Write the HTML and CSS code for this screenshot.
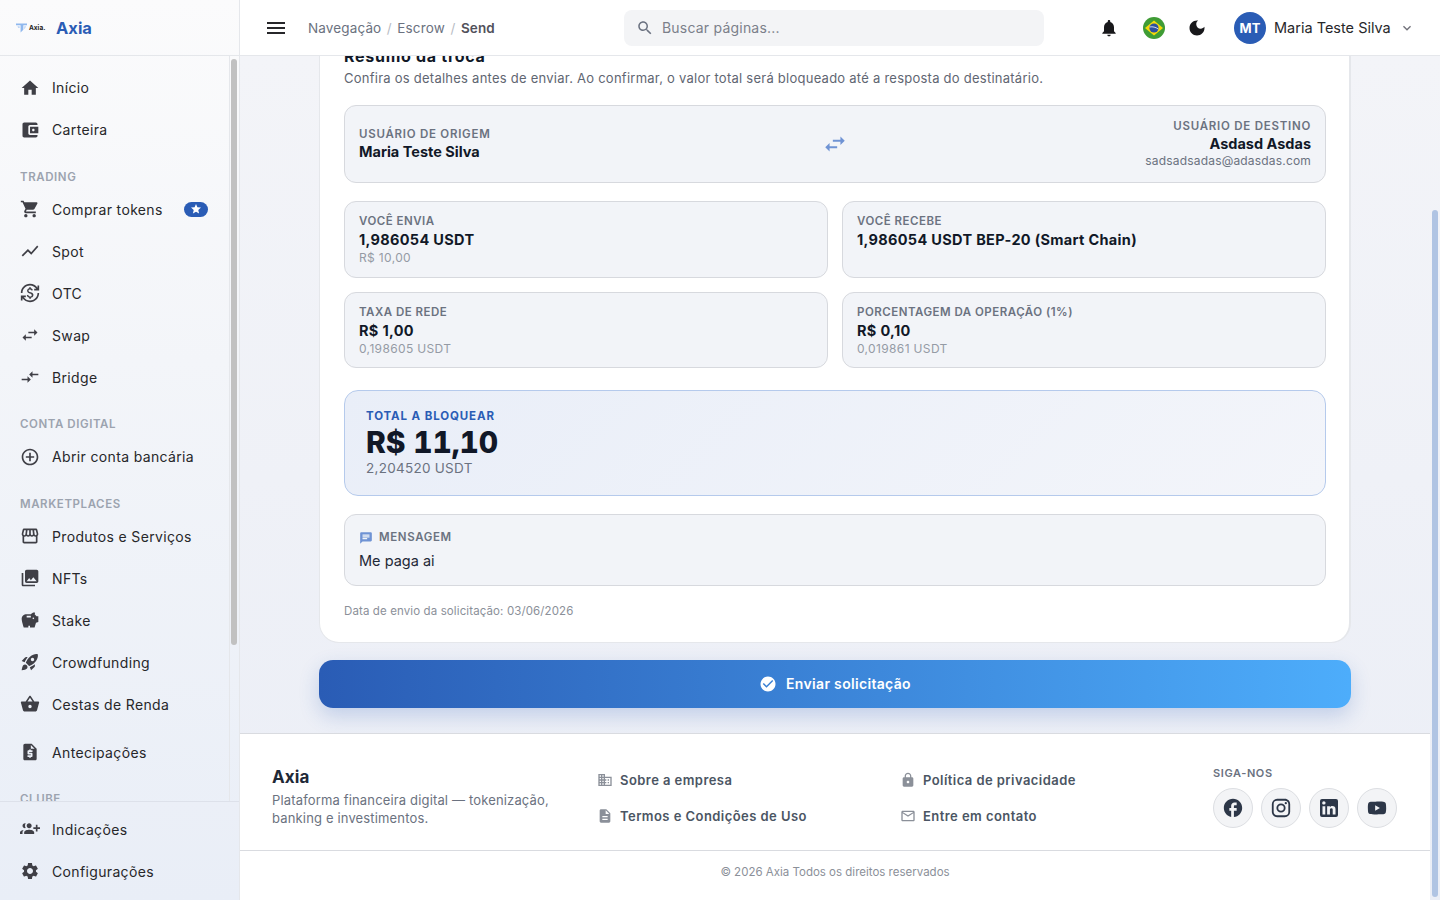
FILE: index.html
```html
<!DOCTYPE html>
<html lang="pt-BR">
<head>
<meta charset="utf-8">
<title>Axia - Send</title>
<link rel="stylesheet" href="styles.css">
</head>
<body>
<div class="app">
  <aside class="sidebar">
    <div class="brand">
      <div class="brand-logo">
        <svg class="brand-mark" viewBox="0 0 12 10"><path d="M0 0h12v2H8v5L5 10V2H0z" fill="#8fb8ee"/><path d="M1.500 3H4v2H2.500zM9 3h2L9.500 6H9z" fill="#bcd4f5"/></svg>
        <span class="brand-tiny">Axia.</span>
      </div>
      <span class="brand-name">Axia</span>
    </div>
    <div class="nav-wrap">
      <nav class="nav">
        <a class="nav-item"><svg class="ico" viewBox="0 0 24 24"><path d="M10 20v-6h4v6h5v-8h3L12 3 2 12h3v8z"/></svg><span>Início</span></a>
        <a class="nav-item"><svg class="ico" viewBox="0 0 24 24"><path d="M21 18v1c0 1.1-.9 2-2 2H5c-1.11 0-2-.9-2-2V5c0-1.1.89-2 2-2h14c1.1 0 2 .9 2 2v1h-9c-1.11 0-2 .9-2 2v8c0 1.1.89 2 2 2h9zm-9-2h10V8H12v8zm4-2.500c-.83 0-1.500-.67-1.500-1.500s.67-1.500 1.500-1.500 1.500.67 1.500 1.500-.67 1.500-1.500 1.500z"/></svg><span>Carteira</span></a>
        <div class="nav-label">TRADING</div>
        <a class="nav-item"><svg class="ico" viewBox="0 0 24 24"><path d="M7 18c-1.1 0-1.99.9-1.99 2S5.9 22 7 22s2-.9 2-2-.9-2-2-2zM1 2v2h2l3.6 7.59-1.35 2.45c-.16.28-.25.61-.25.96 0 1.1.9 2 2 2h12v-2H7.42c-.14 0-.25-.11-.25-.25l.03-.12.9-1.63h7.45c.75 0 1.41-.41 1.75-1.03l3.58-6.49c.08-.14.12-.31.12-.48 0-.55-.45-1-1-1H5.21l-.94-2H1zm16 16c-1.1 0-1.99.9-1.99 2s.89 2 1.99 2 2-.9 2-2-.9-2-2-2z"/></svg><span>Comprar tokens</span><span class="badge"><svg viewBox="0 0 24 24"><path d="M12 17.27L18.18 21l-1.64-7.03L22 9.24l-7.19-.61L12 2 9.19 8.63 2 9.24l5.46 4.73L5.82 21z"/></svg></span></a>
        <a class="nav-item"><svg class="ico" viewBox="0 0 24 24"><path d="M3.5 18.49l6-6.01 4 4L22 6.92l-1.41-1.41-7.09 7.97-4-4L2 16.99z"/></svg><span>Spot</span></a>
        <a class="nav-item"><svg class="ico" viewBox="0 0 24 24"><path d="M12.89 11.1c-1.78-.59-2.64-.96-2.64-1.9 0-1.02 1.11-1.39 1.81-1.39 1.31 0 1.79.99 1.9 1.34l1.58-.67c-.15-.45-.82-1.92-2.54-2.24V5h-2v1.26c-2.48.56-2.49 2.86-2.49 2.96 0 2.27 2.25 2.91 3.35 3.31 1.58.56 2.28 1.07 2.28 2.03 0 1.13-1.05 1.61-1.98 1.61-1.82 0-2.34-1.87-2.4-2.09l-1.66.67c.63 2.19 2.28 2.78 3.02 2.96V19h2v-1.24c.52-.09 3.02-.59 3.02-3.22.01-1.39-.6-2.61-3.25-3.44zM3 21H1v-6h6v2H4.52c1.61 2.41 4.36 4 7.48 4 4.97 0 9-4.03 9-9h2c0 6.08-4.92 11-11 11-3.72 0-7.01-1.85-9-4.67V21zm-2-9C1 5.92 5.92 1 12 1c3.72 0 7.01 1.85 9 4.67V3h2v6h-6V7h2.48C17.87 4.59 15.12 3 12 3c-4.97 0-9 4.03-9 9H1z"/></svg><span>OTC</span></a>
        <a class="nav-item"><svg class="ico" viewBox="0 0 24 24"><path d="M6.99 11L3 15l3.99 4v-3H14v-2H6.99v-3zM21 9l-3.99-4v3H10v2h7.01v3L21 9z"/></svg><span>Swap</span></a>
        <a class="nav-item"><svg class="ico" viewBox="0 0 24 24"><path d="M9.01 14H2v2h7.01v3L13 15l-3.99-4v3zm5.98-1v-3H22V8h-7.01V5L11 9l3.99 4z"/></svg><span>Bridge</span></a>
        <div class="nav-label">CONTA DIGITAL</div>
        <a class="nav-item"><svg class="ico" viewBox="0 0 24 24"><path d="M13 7h-2v4H7v2h4v4h2v-4h4v-2h-4V7zm-1-5C6.48 2 2 6.48 2 12s4.48 10 10 10 10-4.48 10-10S17.52 2 12 2zm0 18c-4.41 0-8-3.59-8-8s3.59-8 8-8 8 3.59 8 8-3.59 8-8 8z"/></svg><span>Abrir conta bancária</span></a>
        <div class="nav-label">MARKETPLACES</div>
        <a class="nav-item"><svg class="ico" viewBox="0 0 24 24"><path d="M21.9 8.89l-1.05-4.37c-.22-.9-1-1.52-1.91-1.52H5.05c-.9 0-1.69.63-1.9 1.52L2.1 8.89c-.24 1.02-.02 2.06.62 2.88.08.11.19.19.28.29V19c0 1.1.9 2 2 2h14c1.1 0 2-.9 2-2v-6.94c.09-.09.2-.18.28-.28.64-.82.87-1.87.62-2.89zm-2.99-3.9l1.05 4.37c.1.42.01.84-.25 1.17-.14.18-.44.47-.94.47-.61 0-1.14-.49-1.21-1.14L16.98 5l1.93-.01zM13 5h1.96l.54 4.52c.05.39-.07.78-.33 1.07-.22.26-.54.41-.95.41-.67 0-1.22-.59-1.22-1.31V5zM8.49 9.52L9.04 5H11v4.69c0 .72-.55 1.31-1.29 1.31-.34 0-.65-.15-.89-.41-.25-.29-.37-.68-.33-1.07zm-4.45-.16L5.05 5h1.97l-.58 4.86c-.08.65-.6 1.14-1.21 1.14-.49 0-.8-.29-.93-.47-.27-.32-.36-.75-.26-1.17zM5 19v-6.03c.08.01.15.03.23.03.87 0 1.66-.36 2.24-.95.6.6 1.4.95 2.31.95.87 0 1.65-.36 2.23-.93.59.57 1.39.93 2.29.93.84 0 1.64-.35 2.24-.95.58.59 1.37.95 2.24.95.08 0 .15-.02.23-.03V19H5z"/></svg><span>Produtos e Serviços</span></a>
        <a class="nav-item"><svg class="ico" viewBox="0 0 24 24"><path d="M22 16V4c0-1.1-.9-2-2-2H8c-1.1 0-2 .9-2 2v12c0 1.1.9 2 2 2h12c1.1 0 2-.9 2-2zm-11-4l2.03 2.71L16 11l4 5H8l3-4zM2 6v14c0 1.1.9 2 2 2h14v-2H4V6H2z"/></svg><span>NFTs</span></a>
        <a class="nav-item"><svg class="ico" viewBox="0 0 24 24"><path d="M19.83 7.5l-2.27-2.27c.07-.42.18-.81.32-1.15.31-.37.22-1.08-.71-1.08-1.64 0-3.09.79-4 2H8C4.46 5 2 7.46 2 10.5S4.5 21 4.5 21H10v-2h2v2h5.5l1.68-5.59L22 14.47V7.5h-2.17zM13 9H8V7h5v2zm3 2c-.55 0-1-.45-1-1s.45-1 1-1 1 .45 1 1-.45 1-1 1z"/></svg><span>Stake</span></a>
        <a class="nav-item"><svg class="ico" viewBox="0 0 24 24"><path d="M9.19 6.35c-2.04 2.29-3.44 5.58-3.57 5.89L2 10.69l4.05-4.05c.47-.47 1.15-.68 1.81-.55l1.33.26zM11.17 17s3.74-1.55 5.89-3.7c5.4-5.4 4.5-9.62 4.21-10.57-.95-.3-5.17-1.19-10.57 4.21C8.55 9.09 7 12.83 7 12.83L11.17 17zm6.48-2.19c-2.29 2.04-5.58 3.44-5.89 3.57L13.31 22l4.05-4.05c.47-.47.68-1.15.55-1.81l-.26-1.33zM9 18c0 .83-.34 1.58-.88 2.12C6.94 21.3 2 22 2 22s.7-4.94 1.88-6.12C4.42 15.34 5.17 15 6 15c1.66 0 3 1.34 3 3zm4-9c0-1.1.9-2 2-2s2 .9 2 2-.9 2-2 2-2-.9-2-2z"/></svg><span>Crowdfunding</span></a>
        <a class="nav-item"><svg class="ico" viewBox="0 0 24 24"><path d="M17.21 9l-4.38-6.56c-.19-.28-.51-.42-.83-.42-.32 0-.64.14-.83.43L6.79 9H2c-.55 0-1 .45-1 1 0 .09.01.18.04.27l2.54 9.27c.23.84 1 1.46 1.92 1.46h13c.92 0 1.69-.62 1.93-1.46l2.54-9.27L23 10c0-.55-.45-1-1-1h-4.79zM9 9l3-4.4L15 9H9zm3 8c-1.1 0-2-.9-2-2s.9-2 2-2 2 .9 2 2-.9 2-2 2z"/></svg><span>Cestas de Renda</span></a>
        <a class="nav-item nav-item-gap"><svg class="ico" viewBox="0 0 24 24"><path d="M14 2H6c-1.1 0-1.99.9-1.99 2L4 20c0 1.1.89 2 1.99 2H18c1.1 0 2-.9 2-2V8l-6-6zm1 10h-4v1h3c.55 0 1 .45 1 1v3c0 .55-.45 1-1 1h-1v1h-2v-1H9v-2h4v-1h-3c-.55 0-1-.45-1-1v-3c0-.55.45-1 1-1h1V9h2v1h2v2zm-2-4V3.5L17.5 8H13z"/></svg><span>Antecipações</span></a>
        <div class="nav-label">CLUBE</div>
      </nav>
      <div class="vbar vbar-nav"><div class="thumb thumb-nav"></div></div>
    </div>
    <div class="side-bottom">
      <a class="nav-item"><svg class="ico ico-flip" viewBox="0 0 24 24"><path d="M8 10H5V7H3v3H0v2h3v3h2v-3h3v-2zm10 1c1.66 0 2.99-1.34 2.99-3S19.66 5 18 5c-.32 0-.63.05-.91.14.57.81.9 1.79.9 2.86s-.34 2.04-.9 2.86c.28.09.59.14.91.14zm-5 0c1.66 0 2.99-1.34 2.99-3S14.66 5 13 5s-3 1.34-3 3 1.34 3 3 3zm6.62 2.16c.83.73 1.38 1.66 1.38 2.84v2h3v-2c0-1.54-2.37-2.49-4.38-2.84zM13 13c-2 0-6 1-6 3v2h12v-2c0-2-4-3-6-3z"/></svg><span>Indicações</span></a>
      <a class="nav-item"><svg class="ico" viewBox="0 0 24 24"><path d="M19.14 12.94c.04-.3.06-.61.06-.94 0-.32-.02-.64-.07-.94l2.03-1.58c.18-.14.23-.41.12-.61l-1.92-3.32c-.12-.22-.37-.29-.59-.22l-2.39.96c-.5-.38-1.03-.7-1.62-.94l-.36-2.54c-.04-.24-.24-.41-.48-.41h-3.84c-.24 0-.43.17-.47.41l-.36 2.54c-.59.24-1.13.57-1.62.94l-2.39-.96c-.22-.08-.47 0-.59.22L2.74 8.87c-.12.21-.08.47.12.61l2.03 1.58c-.05.3-.09.63-.09.94s.02.64.07.94l-2.03 1.58c-.18.14-.23.41-.12.61l1.92 3.32c.12.22.37.29.59.22l2.39-.96c.5.38 1.03.7 1.62.94l.36 2.54c.05.24.24.41.48.41h3.84c.24 0 .44-.17.47-.41l.36-2.54c.59-.24 1.13-.56 1.62-.94l2.39.96c.22.08.47 0 .59-.22l1.92-3.32c.12-.22.07-.47-.12-.61l-2.01-1.58zM12 15.6c-1.98 0-3.6-1.62-3.6-3.6s1.62-3.6 3.6-3.6 3.6 1.62 3.6 3.6-1.62 3.6-3.6 3.6z"/></svg><span>Configurações</span></a>
    </div>
  </aside>

  <div class="main">
    <header class="topbar">
      <svg class="menu-ico" viewBox="0 0 24 24"><path d="M3 18h18v-2H3v2zm0-5h18v-2H3v2zm0-7v2h18V6H3z"/></svg>
      <div class="crumbs"><span>Navegação</span><i>/</i><span>Escrow</span><i>/</i><b>Send</b></div>
      <div class="search">
        <svg class="search-ico" viewBox="0 0 24 24"><path d="M15.5 14h-.79l-.28-.27C15.41 12.59 16 11.11 16 9.5 16 5.91 13.09 3 9.5 3S3 5.91 3 9.5 5.91 16 9.5 16c1.61 0 3.09-.59 4.23-1.57l.27.28v.79l5 4.99L20.49 19l-4.99-5zm-6 0C7.01 14 5 11.99 5 9.5S7.01 5 9.5 5 14 7.01 14 9.5 11.99 14 9.5 14z"/></svg>
        <span>Buscar páginas...</span>
      </div>
      <div class="top-actions">
        <svg class="top-ico" viewBox="0 0 24 24"><path d="M12 22c1.1 0 2-.9 2-2h-4c0 1.1.89 2 2 2zm6-6v-5c0-3.07-1.64-5.64-4.5-6.32V4c0-.83-.67-1.5-1.5-1.5s-1.5.67-1.5 1.5v.68C7.63 5.36 6 7.92 6 11v5l-2 2v1h16v-1l-2-2z"/></svg>
        <svg class="flag" viewBox="0 0 22 22"><circle cx="11" cy="11" r="11" fill="#3f9c35"/><path d="M11 3.6L20 11l-9 7.4L2 11z" fill="#f5d90a"/><circle cx="11" cy="11" r="4.6" fill="#2c4f9e"/><path d="M6.6 10c3-.6 6.2.2 8.7 2" fill="none" stroke="#fff" stroke-width=".8"/></svg>
        <svg class="top-ico" viewBox="0 0 24 24"><path d="M12 3c-4.97 0-9 4.03-9 9s4.03 9 9 9 9-4.03 9-9c0-.46-.04-.92-.1-1.36-.98 1.37-2.58 2.26-4.4 2.26-2.98 0-5.4-2.42-5.4-5.4 0-1.81.89-3.42 2.26-4.4-.44-.06-.9-.1-1.36-.1z"/></svg>
        <div class="user">
          <div class="avatar">MT</div>
          <span class="user-name">Maria Teste Silva</span>
          <svg class="chev" viewBox="0 0 24 24"><path d="M16.59 8.59L12 13.17 7.41 8.59 6 10l6 6 6-6z"/></svg>
        </div>
      </div>
    </header>

    <div class="scroll-wrap">
      <div class="scroller">
        <div class="page">
          <section class="card">
            <h2 class="card-title">Resumo da troca</h2>
            <p class="card-sub">Confira os detalhes antes de enviar. Ao confirmar, o valor total será bloqueado até a resposta do destinatário.</p>

            <div class="box parties">
              <div class="party-left">
                <div class="lbl lbl-party">USUÁRIO DE ORIGEM</div>
                <div class="party-name">Maria Teste Silva</div>
              </div>
              <svg class="swap-ico" viewBox="0 0 24 24"><path d="M6.99 11L3 15l3.99 4v-3H14v-2H6.99v-3zM21 9l-3.99-4v3H10v2h7.01v3L21 9z"/></svg>
              <div class="party-right">
                <div class="lbl lbl-party">USUÁRIO DE DESTINO</div>
                <div class="party-name">Asdasd Asdas</div>
                <div class="party-mail">sadsadsadas@adasdas.com</div>
              </div>
            </div>

            <div class="grid">
              <div class="box cell">
                <div class="lbl">VOCÊ ENVIA</div>
                <div class="val">1,986054 USDT</div>
                <div class="sub">R$ 10,00</div>
              </div>
              <div class="box cell">
                <div class="lbl">VOCÊ RECEBE</div>
                <div class="val">1,986054 USDT BEP-20 (Smart Chain)</div>
              </div>
              <div class="box cell">
                <div class="lbl">TAXA DE REDE</div>
                <div class="val">R$ 1,00</div>
                <div class="sub">0,198605 USDT</div>
              </div>
              <div class="box cell">
                <div class="lbl">PORCENTAGEM DA OPERAÇÃO (1%)</div>
                <div class="val">R$ 0,10</div>
                <div class="sub">0,019861 USDT</div>
              </div>
            </div>

            <div class="total">
              <div class="total-lbl">TOTAL A BLOQUEAR</div>
              <div class="total-val">R$ 11,10</div>
              <div class="total-sub">2,204520 USDT</div>
            </div>

            <div class="box msg">
              <div class="msg-head">
                <svg viewBox="0 0 24 24"><path d="M20 2H4c-1.1 0-1.99.9-1.99 2L2 22l4-4h14c1.1 0 2-.9 2-2V4c0-1.1-.9-2-2-2zM6 9h12v2H6V9zm8 5H6v-2h8v2zm4-6H6V6h12v2z"/></svg>
                <span class="lbl">MENSAGEM</span>
              </div>
              <div class="msg-text">Me paga ai</div>
            </div>

            <div class="date">Data de envio da solicitação: 03/06/2026</div>
          </section>

          <button class="send">
            <svg viewBox="0 0 24 24"><path d="M12 2C6.48 2 2 6.48 2 12s4.48 10 10 10 10-4.48 10-10S17.52 2 12 2zm-2 15l-5-5 1.41-1.41L10 14.17l7.59-7.59L19 8l-9 9z"/></svg>
            <span>Enviar solicitação</span>
          </button>
        </div>

        <footer class="footer">
          <div class="foot-main">
            <div class="foot-brand">
              <div class="foot-title">Axia</div>
              <p>Plataforma financeira digital — tokenização, banking e investimentos.</p>
            </div>
            <div class="foot-links">
              <a><svg viewBox="0 0 24 24"><path d="M12 7V3H2v18h20V7H12zM6 19H4v-2h2v2zm0-4H4v-2h2v2zm0-4H4V9h2v2zm0-4H4V5h2v2zm4 12H8v-2h2v2zm0-4H8v-2h2v2zm0-4H8V9h2v2zm0-4H8V5h2v2zm10 12h-8v-2h2v-2h-2v-2h2v-2h-2V9h8v10zm-2-8h-2v2h2v-2zm0 4h-2v2h2v-2z"/></svg><span>Sobre a empresa</span></a>
              <a><svg viewBox="0 0 24 24"><path d="M14 2H6c-1.1 0-1.99.9-1.99 2L4 20c0 1.1.89 2 1.99 2H18c1.1 0 2-.9 2-2V8l-6-6zm2 16H8v-2h8v2zm0-4H8v-2h8v2zm-3-5V3.5L18.5 9H13z"/></svg><span>Termos e Condições de Uso</span></a>
            </div>
            <div class="foot-links">
              <a><svg viewBox="0 0 24 24"><path d="M18 8h-1V6c0-2.76-2.24-5-5-5S7 3.24 7 6v2H6c-1.1 0-2 .9-2 2v10c0 1.1.9 2 2 2h12c1.1 0 2-.9 2-2V10c0-1.1-.9-2-2-2zm-6 9c-1.1 0-2-.9-2-2s.9-2 2-2 2 .9 2 2-.9 2-2 2zm3.1-9H8.9V6c0-1.71 1.39-3.1 3.1-3.1 1.71 0 3.1 1.39 3.1 3.1v2z"/></svg><span>Política de privacidade</span></a>
              <a><svg viewBox="0 0 24 24"><path d="M20 4H4c-1.1 0-1.99.9-1.99 2L2 18c0 1.1.9 2 2 2h16c1.1 0 2-.9 2-2V6c0-1.1-.9-2-2-2zm0 14H4V8l8 5 8-5v10zm-8-7L4 6h16l-8 5z"/></svg><span>Entre em contato</span></a>
            </div>
            <div class="foot-social">
              <div class="social-lbl">SIGA-NOS</div>
              <div class="social-row">
                <a class="social"><svg viewBox="0 0 24 24"><path d="M22 12c0-5.52-4.48-10-10-10S2 6.48 2 12c0 4.84 3.44 8.87 8 9.8V15H8v-3h2V9.5C10 7.57 11.57 6 13.5 6H16v3h-2c-.55 0-1 .45-1 1v2h3v3h-3v6.95c5.05-.5 9-4.76 9-9.95z"/></svg></a>
                <a class="social"><svg viewBox="0 0 24 24"><path d="M7.8 2h8.4C19.4 2 22 4.6 22 7.8v8.4a5.8 5.8 0 0 1-5.8 5.8H7.8C4.6 22 2 19.4 2 16.2V7.8A5.8 5.8 0 0 1 7.8 2m-.2 2A3.6 3.6 0 0 0 4 7.6v8.8C4 18.39 5.61 20 7.6 20h8.8a3.6 3.6 0 0 0 3.6-3.6V7.6C20 5.61 18.39 4 16.4 4H7.6m9.65 1.5a1.25 1.25 0 0 1 1.25 1.25A1.25 1.25 0 0 1 17.25 8 1.25 1.25 0 0 1 16 6.75a1.25 1.25 0 0 1 1.25-1.25M12 7a5 5 0 0 1 5 5 5 5 0 0 1-5 5 5 5 0 0 1-5-5 5 5 0 0 1 5-5m0 2a3 3 0 0 0-3 3 3 3 0 0 0 3 3 3 3 0 0 0 3-3 3 3 0 0 0-3-3z"/></svg></a>
                <a class="social"><svg class="social-in" viewBox="0 0 24 24"><path d="M19 3a2 2 0 0 1 2 2v14a2 2 0 0 1-2 2H5a2 2 0 0 1-2-2V5a2 2 0 0 1 2-2h14m-.5 15.5v-5.3a3.26 3.26 0 0 0-3.26-3.26c-.85 0-1.84.52-2.32 1.3v-1.11h-2.79v8.37h2.79v-4.93c0-.77.62-1.4 1.39-1.4a1.4 1.4 0 0 1 1.4 1.4v4.93h2.79M6.88 8.56a1.68 1.68 0 0 0 1.68-1.68c0-.93-.75-1.69-1.68-1.69a1.69 1.69 0 0 0-1.69 1.69c0 .93.76 1.68 1.69 1.68m1.39 9.94v-8.37H5.5v8.37h2.77z"/></svg></a>
                <a class="social"><svg viewBox="0 0 24 24"><path d="M10 15l5.19-3L10 9v6m11.56-7.83c.13.47.22 1.1.28 1.9.07.8.1 1.49.1 2.09L22 12c0 2.19-.16 3.8-.44 4.83-.25.9-.83 1.48-1.73 1.73-.47.13-1.33.22-2.65.28-1.3.07-2.49.1-3.59.1L12 19c-4.19 0-6.8-.16-7.83-.44-.9-.25-1.48-.83-1.73-1.73-.13-.47-.22-1.1-.28-1.9-.07-.8-.1-1.49-.1-2.09L2 12c0-2.19.16-3.8.44-4.83.25-.9.83-1.48 1.73-1.73.47-.13 1.33-.22 2.65-.28 1.3-.07 2.49-.1 3.59-.1L12 5c4.19 0 6.8.16 7.83.44.9.25 1.48.83 1.73 1.73z"/></svg></a>
              </div>
            </div>
          </div>
          <div class="foot-copy">© 2026 Axia Todos os direitos reservados</div>
        </footer>
      </div>
      <div class="vbar"><div class="thumb thumb-main"></div></div>
    </div>
  </div>
</div>
</body>
</html>
```

FILE: styles.css
```css
* { box-sizing: border-box; }
html, body { margin: 0; height: 100%; overflow: hidden; }
body {
  font-family: "Inter", "Liberation Sans", sans-serif;
  font-size: 14px;
  letter-spacing: .025em;
  color: #1f2937;
}
p, h2 { margin: 0; }

.app { display: flex; height: 900px; }

/* Sidebar */
.sidebar {
  width: 240px;
  flex: none;
  display: flex;
  flex-direction: column;
  border-right: 1px solid #e5e7eb;
  background: linear-gradient(180deg, #fbfbfc 0%, #f3f5f9 40%, #e9eef7 100%);
}
.brand {
  height: 56px;
  flex: none;
  display: flex;
  align-items: center;
  padding-left: 16px;
  border-bottom: 1px solid #e5e7eb;
}
.brand-logo { width: 40px; display: flex; align-items: center; gap: 2px; }
.brand-mark { width: 11px; height: 10px; }
.brand-tiny { font-size: 6.5px; font-weight: 700; letter-spacing: 0; color: #222; }
.brand-name { font-size: 16.5px; font-weight: 700; color: #2a5cb5; letter-spacing: 0; }

.nav-wrap { flex: 1; min-height: 0; display: flex; }
.nav { flex: 1; min-width: 0; overflow: hidden; padding-top: 10.5px; }
.vbar { width: 10px; flex: none; }
.vbar-nav { border-left: 1px solid #e5e7eb; }
.thumb { width: 6px; border-radius: 3px; }
.thumb-nav { height: 586px; margin: 3px 0 0 1px; background: #c1c1c1; }
.thumb-main { height: 687px; margin: 154px 0 0 2px; background: #b0c4e3; }

.nav-item {
  height: 42px;
  display: flex;
  align-items: center;
  gap: 12px;
  padding: 0 21px 0 20px;
  color: #27272a;
}
.nav-item-gap { margin-top: 6px; }
.ico { width: 20px; height: 20px; flex: none; fill: #3f3f46; }
.ico-flip { transform: scaleX(-1); }
.badge {
  margin-left: auto;
  width: 24px;
  height: 15px;
  border-radius: 8px;
  background: #2a5cb5;
  display: flex;
  align-items: center;
  justify-content: center;
}
.badge svg { width: 12px; height: 12px; fill: #fff; }
.nav-label {
  height: 37.67px;
  padding-top: 17px;
  line-height: 18px;
  padding-left: 20px;
  font-size: 11.5px;
  font-weight: 600;
  letter-spacing: .05em;
  color: #9ca3af;
}
.side-bottom {
  flex: none;
  padding: 6px 0 8px;
  border-top: 1px solid #dde1ea;
  background: linear-gradient(180deg, #ebeff7, #e9eef7);
}

/* Main */
.main { flex: 1; min-width: 0; display: flex; flex-direction: column; }
.topbar {
  height: 56px;
  flex: none;
  display: flex;
  align-items: center;
  background: #fff;
  border-bottom: 1px solid #e5e7eb;
  padding-left: 24px;
}
.menu-ico { width: 24px; height: 24px; fill: #27272a; flex: none; }
.crumbs { width: 316px; flex: none; margin-left: 20px; display: flex; align-items: center; gap: 5.5px; font-size: 13.5px; letter-spacing: .01em; color: #6b7280; }
.crumbs i { font-style: normal; color: #b8bcc4; }
.crumbs b { font-weight: 600; color: #52525b; }
.search {
  width: 420px;
  flex: none;
  height: 36px;
  border-radius: 8px;
  background: #f3f4f6;
  display: flex;
  align-items: center;
  padding-left: 12px;
  gap: 8px;
  letter-spacing: .015em;
  color: #7b808a;
}
.search-ico { width: 18px; height: 18px; fill: #6b7280; }
.top-actions { display: flex; align-items: center; margin-left: 55px; }
.top-ico { width: 20px; height: 20px; fill: #18181b; flex: none; }
.flag { width: 22px; height: 22px; margin: 0 22px 0 24px; flex: none; }
.user { display: flex; align-items: center; margin-left: 27px; }
.avatar {
  width: 32px;
  height: 32px;
  border-radius: 50%;
  background: #2a5cb5;
  color: #fff;
  font-size: 13px;
  font-weight: 700;
  letter-spacing: 0;
  display: flex;
  align-items: center;
  justify-content: center;
}
.user-name { margin-left: 8px; font-size: 14.5px; color: #27272a; letter-spacing: 0; }
.chev { width: 16px; height: 16px; margin-left: 8px; fill: #71717a; }

.scroll-wrap {
  flex: 1;
  min-height: 0;
  display: flex;
  background: linear-gradient(180deg, #f3f4f8, #ebeef6);
}
.scroller {
  flex: 1;
  min-width: 0;
  overflow: hidden;
  display: flex;
  flex-direction: column;
  justify-content: flex-end;
}
.page { flex: none; width: 1032px; margin: 0 auto; padding: 0 0 25px; }

.card {
  background: #fff;
  border: 1px solid #e5e7eb;
  border-right-width: 2px;
  border-radius: 20px;
  padding: 24px 23px 23px 24px;
}
.card-title { font-size: 16px; line-height: 22px; font-weight: 700; color: #111827; letter-spacing: .045em; }
.card-sub { margin-top: 2px; font-size: 13px; line-height: 18px; color: #5f6672; letter-spacing: .019em; }

.box {
  background: #f2f4f8;
  border: 1px solid #d7d9de;
  border-radius: 12px;
}
.parties {
  margin-top: 18px;
  height: 78px;
  padding: 12px 14px 14px;
  display: grid;
  grid-template-columns: 1fr auto 1fr;
  align-items: center;
}
.party-left { padding-bottom: 2px; }
.swap-ico { width: 26px; height: 26px; fill: #6f93d4; margin-top: 1px; }
.party-right { text-align: right; }
.lbl { font-size: 11.5px; line-height: 17px; font-weight: 600; letter-spacing: .043em; color: #6b7280; }
.lbl-party { letter-spacing: .065em; }
.party-name { font-size: 14.5px; line-height: 17px; font-weight: 700; color: #111827; letter-spacing: 0; }
.party-mail { font-size: 12px; line-height: 17px; color: #6b7280; letter-spacing: .015em; }

.grid { margin-top: 18px; display: grid; grid-template-columns: 1fr 1fr; gap: 14px; }
.cell { height: 76.5px; padding: 11px 14px 0; }
.val { font-size: 14.5px; line-height: 20px; font-weight: 700; color: #111827; letter-spacing: .022em; }
.sub { font-size: 12px; line-height: 15px; color: #959ba5; }

.total {
  margin-top: 22px;
  height: 106px;
  padding: 17px 21px 0;
  border: 1px solid #b5caec;
  border-radius: 14px;
  background: linear-gradient(135deg, #e9eef8, #f3f5fa);
}
.total-lbl { font-size: 11.5px; line-height: 16px; font-weight: 700; letter-spacing: .077em; color: #2a5cb5; }
.total-val { font-size: 30px; line-height: 36px; font-weight: 800; color: #111827; letter-spacing: -.005em; font-variant-numeric: tabular-nums; }
.total-sub { margin-top: -1px; font-size: 13.5px; line-height: 18px; color: #6b7280; letter-spacing: .02em; }

.msg { margin-top: 18px; height: 72px; padding: 14px 14px 0; }
.msg-head { display: flex; align-items: center; gap: 6px; }
.msg-head svg { width: 14px; height: 14px; fill: #6f93d4; }
.msg-head .lbl { letter-spacing: .055em; }
.msg-text { margin-top: 5px; font-size: 14.5px; line-height: 20px; color: #1f2937; letter-spacing: 0; }

.date { margin-top: 17px; font-size: 11.5px; line-height: 16px; color: #8b9099; letter-spacing: .01em; }

.send {
  display: flex;
  align-items: center;
  justify-content: center;
  gap: 9px;
  width: 100%;
  height: 48px;
  margin-top: 17px;
  padding: 0 0 1px;
  border: 0;
  border-radius: 14px;
  background: linear-gradient(90deg, #2a5cb5, #4dadfb);
  box-shadow: 0 8px 20px rgba(42, 92, 181, .22);
  color: #fff;
  font: inherit;
  font-weight: 600;
  letter-spacing: .023em;
}
.send svg { width: 18px; height: 18px; fill: #fff; }

.footer { flex: none; background: #fff; border-top: 1px solid #d9dbe0; height: 167px; }
.foot-main {
  height: 117px;
  padding: 32px 32px 0;
  display: grid;
  grid-template-columns: 325px 303px 313px 1fr;
  border-bottom: 1px solid #d9dbe0;
}
.foot-title { font-size: 17px; line-height: 22px; font-weight: 700; color: #1f2937; letter-spacing: .005em; }
.foot-brand p { margin-top: 3px; width: 300px; font-size: 13px; line-height: 18px; color: #6b7280; letter-spacing: .012em; }
.foot-links { display: flex; flex-direction: column; gap: 16px; padding-top: 4px; }
.foot-links a { display: flex; align-items: center; gap: 7px; height: 20px; font-size: 13px; font-weight: 600; letter-spacing: .034em; color: #4b5563; }
.foot-links svg { width: 16px; height: 16px; fill: #8b9099; flex: none; }
.foot-social { margin-top: -1px; }
.social-lbl { font-size: 11px; line-height: 16px; font-weight: 600; letter-spacing: .055em; color: #6b7280; }
.social-row { margin-top: 7px; display: flex; gap: 8px; }
.social {
  width: 40px;
  height: 40px;
  border-radius: 50%;
  background: #f3f4f6;
  border: 1px solid #dcdee2;
  display: flex;
  align-items: center;
  justify-content: center;
}
.social svg { width: 22px; height: 22px; fill: #2d3748; }
.social .social-in { width: 24px; height: 24px; }
.foot-copy { text-align: center; padding-top: 13px; font-size: 11.5px; line-height: 16px; color: #8b9099; letter-spacing: 0; }
```
